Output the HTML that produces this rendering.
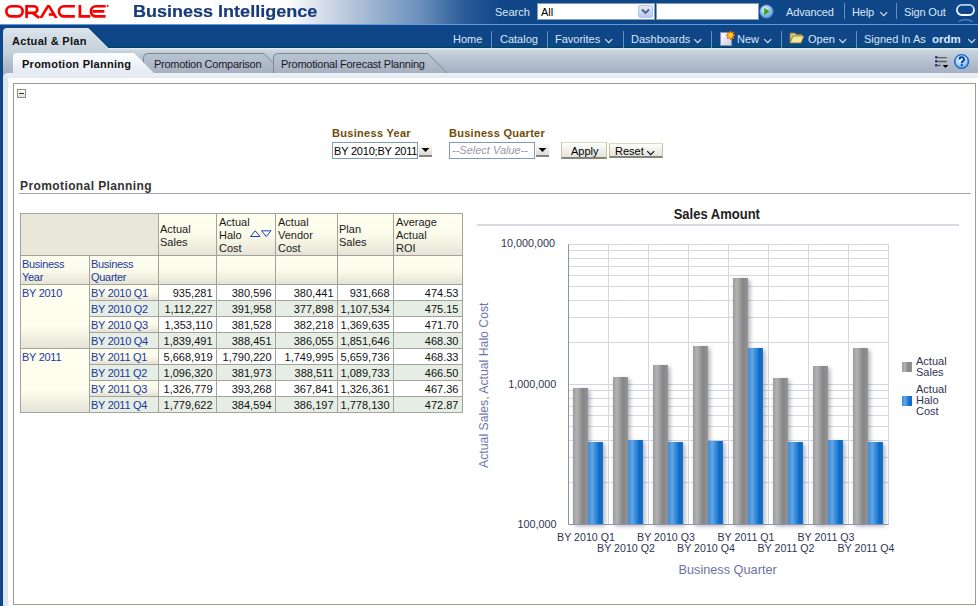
<!DOCTYPE html>
<html><head><meta charset="utf-8">
<style>
*{box-sizing:border-box}
html,body{margin:0;padding:0}
body{width:978px;height:606px;position:relative;overflow:hidden;background:#fff;font-family:"Liberation Sans",sans-serif;font-size:11px;color:#222}
.a{position:absolute;white-space:nowrap}
#hdr{left:0;top:0;width:978px;height:24px;background:linear-gradient(90deg,#fff 0px,#fff 285px,#b6c6da 350px,#6a8fbc 420px,#2a5a98 465px,#0f4789 500px,#0e4688 978px)}
#hline{left:0;top:24px;width:978px;height:1px;background:#5e9ae4}
#nav{left:0;top:25px;width:978px;height:23px;background:linear-gradient(#0e4688 0px,#0e4688 20px,#064e80 20px,#054b7c 22px,#043d6e 22px)}
#tbar{left:0;top:48px;width:978px;height:30px;background:linear-gradient(#d6e0e7 1px,#c8d4dd 3px,#bcc8d4 9px,#afbbcb 17px,#a5b1c3 25px)}
#thl{left:0;top:48px;width:978px;height:1px;background:#e4e9ee}
#tstrip{left:3px;top:73px;width:975px;height:533px;background:linear-gradient(#edf1f7,#e3e9f2 5px,#dce5f0 6px);border-top-left-radius:5px}
#wbody{left:8px;top:78px;width:970px;height:528px;background:#fff}
#lstrip{left:0;top:25px;width:3px;height:581px;background:#0e4688}
#lstrip2{left:3px;top:73px;width:5px;height:533px;background:#d9e4f0}
.w{color:#dbe7f5}
.sep{position:absolute;width:1px;background:#6690b6}
</style></head><body>
<div class="a" id="hdr"></div>
<div class="a" id="hline"></div>
<div class="a" id="nav"></div>
<div class="a" id="tbar"></div>
<div class="a" id="thl"></div>
<div class="a" id="lstrip"></div>
<div class="a" id="tstrip"></div>
<div class="a" id="wbody"></div>

<!-- ORACLE logo -->
<svg class="a" style="left:0;top:0" width="120" height="23" viewBox="0 0 120 23">
 <g fill="none" stroke="#f80000" stroke-width="2.7">
  <rect x="6.35" y="6.25" width="16.3" height="10.2" rx="5.1"/>
  <path d="M26.6 17.9V6.25h7.4a3.3 3.3 0 0 1 0 6.6h-6.2M32.6 12.85l6.6 5"/>
  <path d="M74.9 6.25H64.1a5.1 5.1 0 0 0 0 10.2H74.9"/>
  <path d="M79.9 4.9v11.55h10.4"/>
  <path d="M105.6 6.25H96.0a5.1 5.1 0 0 0 0 10.2H105.6M92.6 11.35H104.4"/>
 </g>
 <path d="M39.2 17.9L47.2 4.9H49.8L57.8 17.9H54.7L48.5 7.7L42.3 17.9Z" fill="#f80000"/>
 <rect x="48.8" y="13.2" width="5.4" height="2.6" fill="#f80000"/>
 <circle cx="107.6" cy="6.0" r="1" fill="#f80000"/>
</svg>
<div class="a" style="left:133px;top:2.5px;font-size:16px;font-weight:bold;color:#183c7a;-webkit-text-stroke:0.2px #183c7a;transform:scaleX(1.126);transform-origin:0 0">Business Intelligence</div>

<!-- header right -->
<div class="a w" style="left:495px;top:6px;font-size:11px">Search</div>
<div class="a" style="left:537px;top:3px;width:118px;height:17px;background:#fff;border:1px solid #7f9db9"></div>
<div class="a" style="left:541px;top:6px;font-size:11px;color:#000">All</div>
<div class="a" style="left:638px;top:5px;width:15px;height:13px;background:linear-gradient(#dfe8fb,#b8caf0);border:1px solid #b4c6ee;border-radius:2px"></div>
<svg class="a" style="left:640px;top:7px" width="11" height="9"><path d="M2 2.5l3.5 3.5 3.5-3.5" fill="none" stroke="#4d6185" stroke-width="1.8"/></svg>
<div class="a" style="left:656px;top:3px;width:103px;height:17px;background:#fff;border:1px solid #7f9db9"></div>
<svg class="a" style="left:759px;top:4px" width="16" height="16"><defs><radialGradient id="gb" cx="40%" cy="35%" r="70%"><stop offset="0" stop-color="#e6f3ff"/><stop offset="1" stop-color="#4b95d8"/></radialGradient></defs><circle cx="7.5" cy="7.5" r="6.8" fill="url(#gb)" stroke="#2f6eb4" stroke-width="0.8"/><path d="M5.2 3.8l5.4 3.7-5.4 3.7z" fill="#3ca21a"/></svg>
<div class="a w" style="left:786px;top:6px;font-size:11px;letter-spacing:-0.15px">Advanced</div>
<div class="sep" style="left:844px;top:3px;height:16px"></div>
<div class="a w" style="left:852px;top:6px;font-size:11px;letter-spacing:-0.15px">Help</div>
<svg class="a" style="left:879px;top:11px" width="10" height="7"><path d="M1.2 1.2l3.5 3.5 3.5-3.5" fill="none" stroke="#dbe7f5" stroke-width="1.15"/></svg>
<div class="sep" style="left:896px;top:3px;height:16px"></div>
<div class="a w" style="left:904px;top:6px;font-size:11px;letter-spacing:-0.15px">Sign Out</div>
<svg class="a" style="left:954px;top:2px" width="22" height="21"><defs><linearGradient id="og" x1="0" y1="0" x2="0" y2="1"><stop offset="0" stop-color="#b4d0f2"/><stop offset="1" stop-color="#ffffff"/></linearGradient></defs><rect x="2.9" y="2.9" width="17.1" height="10.1" rx="5" fill="none" stroke="url(#og)" stroke-width="1.9"/><path d="M4.5 19.6Q11.5 15.4 18.5 19.6" fill="none" stroke="#4a7ab8" stroke-width="1.5"/></svg>

<!-- nav row 2 -->
<div class="a w" style="left:453px;top:33px;font-size:11px">Home</div>
<div class="sep" style="left:491px;top:31px;height:17px"></div>
<div class="a w" style="left:500px;top:33px;font-size:11px">Catalog</div>
<div class="sep" style="left:547px;top:31px;height:17px"></div>
<div class="a w" style="left:555px;top:33px;font-size:11px">Favorites</div>
<svg class="a" style="left:604px;top:38px" width="10" height="7"><path d="M1.2 1.2l3.5 3.5 3.5-3.5" fill="none" stroke="#dbe7f5" stroke-width="1.15"/></svg>
<div class="sep" style="left:623px;top:31px;height:17px"></div>
<div class="a w" style="left:631px;top:33px;font-size:11px">Dashboards</div>
<svg class="a" style="left:693px;top:38px" width="10" height="7"><path d="M1.2 1.2l3.5 3.5 3.5-3.5" fill="none" stroke="#dbe7f5" stroke-width="1.15"/></svg>
<div class="sep" style="left:711px;top:31px;height:17px"></div>
<svg class="a" style="left:719px;top:30px" width="17" height="17"><defs><linearGradient id="ng" x1="0" y1="0" x2="1" y2="1"><stop offset="0" stop-color="#ffffff"/><stop offset="1" stop-color="#c8cce8"/></linearGradient></defs><path d="M1.5 2.5h8l3 3v10h-11z" fill="url(#ng)" stroke="#8a92b8" stroke-width="1"/><path d="M11.5 0.8l1 2.2 2.3-1-1 2.3 2.2 1-2.2 1 1 2.3-2.3-1-1 2.2-1-2.2-2.3 1 1-2.3-2.2-1 2.2-1-1-2.3 2.3 1z" fill="#ffd21c" stroke="#e2620a" stroke-width="0.9" stroke-linejoin="round"/></svg>
<div class="a w" style="left:737px;top:33px;font-size:11px">New</div>
<svg class="a" style="left:763px;top:38px" width="10" height="7"><path d="M1.2 1.2l3.5 3.5 3.5-3.5" fill="none" stroke="#dbe7f5" stroke-width="1.15"/></svg>
<div class="sep" style="left:781px;top:31px;height:17px"></div>
<svg class="a" style="left:789px;top:31px" width="17" height="14"><path d="M1 2h5l1.5 1.5H13v2H4L1 12z" fill="#d8c878" stroke="#8a7a30" stroke-width="0.8"/><path d="M1 12l3-7h11l-3 7z" fill="#f0e6a0" stroke="#8a7a30" stroke-width="0.8"/></svg>
<div class="a w" style="left:808px;top:33px;font-size:11px">Open</div>
<svg class="a" style="left:838px;top:38px" width="10" height="7"><path d="M1.2 1.2l3.5 3.5 3.5-3.5" fill="none" stroke="#dbe7f5" stroke-width="1.15"/></svg>
<div class="sep" style="left:856px;top:31px;height:17px"></div>
<div class="a w" style="left:864px;top:33px;font-size:11px">Signed In As</div>
<div class="a w" style="left:932px;top:33px;font-size:11.5px;font-weight:bold">ordm</div>
<svg class="a" style="left:967px;top:38px" width="10" height="7"><path d="M1.2 1.2l3.5 3.5 3.5-3.5" fill="none" stroke="#dbe7f5" stroke-width="1.15"/></svg>


<!-- tabs -->
<svg class="a" style="left:0;top:0" width="978" height="80">
 <defs>
  <linearGradient id="tg1" x1="0" y1="0" x2="0" y2="1"><stop offset="0" stop-color="#dce5ec"/><stop offset="0.5" stop-color="#cfdae3"/><stop offset="1" stop-color="#c6d2dc"/></linearGradient>
  <linearGradient id="tg2" x1="0" y1="0" x2="0" y2="1"><stop offset="0" stop-color="#fdfeff"/><stop offset="0.5" stop-color="#f0f4f8"/><stop offset="1" stop-color="#e2e9f1"/></linearGradient>
  <linearGradient id="tg3" x1="0" y1="0" x2="0" y2="1"><stop offset="0" stop-color="#b9c4d1"/><stop offset="1" stop-color="#a6b2c1"/></linearGradient>
 </defs>
 <path d="M3 51V32Q3 28 7 28H88L111 51Z" fill="url(#tg1)"/><path d="M88.5 28.5L108 48" stroke="#e4ebf1" stroke-width="1" opacity="0.7"/>
 <path d="M143.5 73V57.5Q143.5 53.5 147.5 53.5H264L283 73" fill="url(#tg3)" stroke="#7b8898" stroke-width="1"/>
 <path d="M273.5 73V57.5Q273.5 53.5 277.5 53.5H428L447 73" fill="url(#tg3)" stroke="#7b8898" stroke-width="1"/>
 <path d="M13 74V57Q13 53 17 53H134L155 74Z" fill="url(#tg2)"/>
</svg>
<div class="a" style="left:12px;top:35px;font-size:11px;font-weight:bold;letter-spacing:0.3px;color:#111">Actual &amp; Plan</div>
<div class="a" style="left:22px;top:58px;font-size:11px;font-weight:bold;letter-spacing:0.26px;color:#111">Promotion Planning</div>
<div class="a" style="left:154px;top:58px;font-size:11px;letter-spacing:-0.26px;color:#1a1a2a">Promotion Comparison</div>
<div class="a" style="left:281px;top:58px;font-size:11px;letter-spacing:-0.23px;color:#1a1a2a">Promotional Forecast Planning</div>
<svg class="a" style="left:934px;top:54px" width="16" height="16"><g fill="#28286a"><circle cx="2.3" cy="3.3" r="1.3"/><circle cx="2.3" cy="7.2" r="1.3"/><circle cx="2.3" cy="11.2" r="1.3"/></g><g stroke="#5c5c5c" stroke-width="1.3"><path d="M3.5 3.6h9.3M3.5 7.5h9.3M3.5 11.5h3"/></g><path d="M8.6 11h5.8l-2.9 3z" fill="#000"/></svg>
<svg class="a" style="left:953px;top:53px" width="18" height="18"><defs><radialGradient id="hg" cx="45%" cy="35%" r="65%"><stop offset="0" stop-color="#f2f9ff"/><stop offset="0.6" stop-color="#a8d4f8"/><stop offset="1" stop-color="#5aa0e8"/></radialGradient></defs><circle cx="8.6" cy="8.5" r="6.9" fill="url(#hg)" stroke="#1b5fc2" stroke-width="1.4"/><path d="M6.4 6.4a2.3 2.2 0 1 1 3.4 1.9c-0.9 0.5-1.1 0.9-1.1 1.9" fill="none" stroke="#0c3c9e" stroke-width="1.9"/><rect x="7.7" y="11.2" width="2" height="1.9" fill="#0c3c9e"/></svg>

<!-- panel -->
<div class="a" style="left:13px;top:83px;width:963px;height:522px;border:1px solid #9a9b93"></div>
<div class="a" style="left:17px;top:89px;width:9px;height:9px;border:1px solid #8f8f88;background:linear-gradient(#fbfbf4,#e4e4da)"></div>
<div class="a" style="left:19px;top:93px;width:5px;height:1px;background:#333"></div>
<!-- CONTENT -->
<!-- prompts -->
<div class="a" style="left:332px;top:127px;font-size:11px;font-weight:bold;letter-spacing:0.3px;color:#6f4c08">Business Year</div>
<div class="a" style="left:449px;top:127px;font-size:11px;font-weight:bold;letter-spacing:0.27px;color:#6f4c08">Business Quarter</div>
<div class="a" style="left:332px;top:142px;width:86px;height:17px;border:1px solid #7f9db9;background:#fff"></div>
<div class="a" style="left:334px;top:145px;font-size:11px;letter-spacing:-0.2px;color:#000">BY 2010;BY 2011</div>
<div class="a" style="left:449px;top:142px;width:86px;height:17px;border:1px solid #7f9db9;background:#fff"></div>
<div class="a" style="left:452px;top:144px;font-size:11px;font-style:italic;color:#9a98a8">--Select Value--</div>
<div class="a" style="left:419px;top:144px;width:13px;height:13px;border-bottom:2px solid #85857f;background:linear-gradient(#fafaf8,#dcdcd4)"></div>
<svg class="a" style="left:419px;top:144px" width="13" height="13"><path d="M2.6 4h7.8l-3.9 4z" fill="#000"/></svg>
<div class="a" style="left:536px;top:144px;width:13px;height:13px;border-bottom:2px solid #85857f;background:linear-gradient(#fafaf8,#dcdcd4)"></div>
<svg class="a" style="left:536px;top:144px" width="13" height="13"><path d="M2.6 4h7.8l-3.9 4z" fill="#000"/></svg>
<div class="a" style="left:561px;top:142px;width:46px;height:17px;border:1px solid #c8c39a;border-top-color:#dcd8bc;border-bottom:2px solid #85847a;background:linear-gradient(#fdfdfa,#e4e4dc)"></div>
<div class="a" style="left:571px;top:145px;font-size:11px;color:#000">Apply</div>
<div class="a" style="left:609px;top:143px;width:54px;height:15px;border:1px solid #c8c39a;border-top-color:#dcd8bc;border-bottom:2px solid #85847a;background:linear-gradient(#fdfdfa,#e4e4dc)"></div>
<div class="a" style="left:615px;top:145px;font-size:11px;color:#000">Reset</div>
<svg class="a" style="left:646px;top:150px" width="10" height="7"><path d="M1.2 1.2l3.5 3.5 3.5-3.5" fill="none" stroke="#111" stroke-width="1.2"/></svg>
<div class="a" style="left:20px;top:179px;font-size:12px;font-weight:bold;letter-spacing:0.4px;color:#333">Promotional Planning</div>
<div class="a" style="left:19px;top:193px;width:952px;height:1px;background:#9ea3b4"></div>
<div class="a" style="left:20px;top:213px;width:138px;height:42px;background:#e9e7d9"></div>
<div class="a" style="left:158px;top:213px;width:304px;height:42px;background:linear-gradient(#ffffef 0%,#fcfcec 50%,#e5e3d5 100%)"></div>
<div class="a" style="left:20px;top:255px;width:442px;height:29px;background:linear-gradient(#ffffef 0%,#fcfcec 50%,#e5e3d5 100%)"></div>
<div class="a" style="left:20px;top:284px;width:69px;height:64px;background:linear-gradient(#ffffef 0%,#fdfdee 65%,#e6e4d6 100%)"></div>
<div class="a" style="left:20px;top:348px;width:69px;height:64px;background:linear-gradient(#ffffef 0%,#fdfdee 65%,#e6e4d6 100%)"></div>
<div class="a" style="left:89px;top:284px;width:69px;height:16px;background:linear-gradient(#ffffef 0%,#fcfcec 50%,#e5e3d5 100%)"></div>
<div class="a" style="left:158px;top:284px;width:304px;height:16px;background:#fff"></div>
<div class="a" style="left:89px;top:300px;width:69px;height:16px;background:#e5ede4"></div>
<div class="a" style="left:158px;top:300px;width:304px;height:16px;background:#e5ede4"></div>
<div class="a" style="left:89px;top:316px;width:69px;height:16px;background:linear-gradient(#ffffef 0%,#fcfcec 50%,#e5e3d5 100%)"></div>
<div class="a" style="left:158px;top:316px;width:304px;height:16px;background:#fff"></div>
<div class="a" style="left:89px;top:332px;width:69px;height:16px;background:#e5ede4"></div>
<div class="a" style="left:158px;top:332px;width:304px;height:16px;background:#e5ede4"></div>
<div class="a" style="left:89px;top:348px;width:69px;height:16px;background:linear-gradient(#ffffef 0%,#fcfcec 50%,#e5e3d5 100%)"></div>
<div class="a" style="left:158px;top:348px;width:304px;height:16px;background:#fff"></div>
<div class="a" style="left:89px;top:364px;width:69px;height:16px;background:#e5ede4"></div>
<div class="a" style="left:158px;top:364px;width:304px;height:16px;background:#e5ede4"></div>
<div class="a" style="left:89px;top:380px;width:69px;height:16px;background:linear-gradient(#ffffef 0%,#fcfcec 50%,#e5e3d5 100%)"></div>
<div class="a" style="left:158px;top:380px;width:304px;height:16px;background:#fff"></div>
<div class="a" style="left:89px;top:396px;width:69px;height:16px;background:#e5ede4"></div>
<div class="a" style="left:158px;top:396px;width:304px;height:16px;background:#e5ede4"></div>
<div class="a" style="left:20px;top:213px;width:443px;height:1px;background:#a3a39b"></div>
<div class="a" style="left:20px;top:255px;width:443px;height:1px;background:#a3a39b"></div>
<div class="a" style="left:20px;top:284px;width:443px;height:1px;background:#a3a39b"></div>
<div class="a" style="left:20px;top:412px;width:443px;height:1px;background:#a3a39b"></div>
<div class="a" style="left:20px;top:348px;width:443px;height:1px;background:#a3a39b"></div>
<div class="a" style="left:89px;top:300px;width:374px;height:1px;background:#a3a39b"></div>
<div class="a" style="left:89px;top:316px;width:374px;height:1px;background:#a3a39b"></div>
<div class="a" style="left:89px;top:332px;width:374px;height:1px;background:#a3a39b"></div>
<div class="a" style="left:89px;top:364px;width:374px;height:1px;background:#a3a39b"></div>
<div class="a" style="left:89px;top:380px;width:374px;height:1px;background:#a3a39b"></div>
<div class="a" style="left:89px;top:396px;width:374px;height:1px;background:#a3a39b"></div>
<div class="a" style="left:20px;top:213px;width:1px;height:200px;background:#a3a39b"></div>
<div class="a" style="left:462px;top:213px;width:1px;height:200px;background:#a3a39b"></div>
<div class="a" style="left:158px;top:213px;width:1px;height:200px;background:#a3a39b"></div>
<div class="a" style="left:89px;top:255px;width:1px;height:158px;background:#a3a39b"></div>
<div class="a" style="left:216px;top:213px;width:1px;height:200px;background:#a3a39b"></div>
<div class="a" style="left:275px;top:213px;width:1px;height:200px;background:#a3a39b"></div>
<div class="a" style="left:337px;top:213px;width:1px;height:200px;background:#a3a39b"></div>
<div class="a" style="left:393px;top:213px;width:1px;height:200px;background:#a3a39b"></div>
<div class="t a" style="left:160px;top:223.4px;font-size:11px;line-height:13px;color:#1a1a1a;">Actual</div>
<div class="t a" style="left:160px;top:236.4px;font-size:11px;line-height:13px;color:#1a1a1a;">Sales</div>
<div class="t a" style="left:219px;top:215.5px;font-size:11px;line-height:13px;color:#1a1a1a;">Actual</div>
<div class="t a" style="left:219px;top:228.5px;font-size:11px;line-height:13px;color:#1a1a1a;">Halo</div>
<div class="t a" style="left:219px;top:241.5px;font-size:11px;line-height:13px;color:#1a1a1a;">Cost</div>
<div class="t a" style="left:278px;top:215.5px;font-size:11px;line-height:13px;color:#1a1a1a;">Actual</div>
<div class="t a" style="left:278px;top:228.5px;font-size:11px;line-height:13px;color:#1a1a1a;">Vendor</div>
<div class="t a" style="left:278px;top:241.5px;font-size:11px;line-height:13px;color:#1a1a1a;">Cost</div>
<div class="t a" style="left:339px;top:223.4px;font-size:11px;line-height:13px;color:#1a1a1a;">Plan</div>
<div class="t a" style="left:339px;top:236.4px;font-size:11px;line-height:13px;color:#1a1a1a;">Sales</div>
<div class="t a" style="left:396px;top:215.5px;font-size:11px;line-height:13px;color:#1a1a1a;">Average</div>
<div class="t a" style="left:396px;top:228.5px;font-size:11px;line-height:13px;color:#1a1a1a;">Actual</div>
<div class="t a" style="left:396px;top:241.5px;font-size:11px;line-height:13px;color:#1a1a1a;">ROI</div>
<svg class="a" style="left:249px;top:229px" width="25" height="9"><path d="M1.5 7.5h9.5L6.2 1.8z" fill="none" stroke="#1c3fae" stroke-width="1"/><path d="M12.5 1.8h9.5L17.2 7.5z" fill="none" stroke="#1c3fae" stroke-width="1"/></svg>
<div class="t a" style="left:22px;top:257.8px;font-size:11px;line-height:13px;color:#1b38a0;letter-spacing:-0.3px">Business</div>
<div class="t a" style="left:22px;top:271px;font-size:11px;line-height:13px;color:#1b38a0;letter-spacing:-0.3px">Year</div>
<div class="t a" style="left:91px;top:257.8px;font-size:11px;line-height:13px;color:#1b38a0;letter-spacing:-0.3px">Business</div>
<div class="t a" style="left:91px;top:271px;font-size:11px;line-height:13px;color:#1b38a0;letter-spacing:-0.3px">Quarter</div>
<div class="t a" style="left:22px;top:287px;font-size:11px;line-height:13px;color:#1b38a0;letter-spacing:-0.28px">BY 2010</div>
<div class="t a" style="left:22px;top:351px;font-size:11px;line-height:13px;color:#1b38a0;letter-spacing:-0.28px">BY 2011</div>
<div class="t a" style="left:91px;top:287.2px;font-size:11px;line-height:13px;color:#1b38a0;letter-spacing:-0.28px">BY 2010 Q1</div>
<div class="t a" style="right:765.5px;top:287.2px;font-size:11px;line-height:13px;color:#111">935,281</div>
<div class="t a" style="right:706.5px;top:287.2px;font-size:11px;line-height:13px;color:#111">380,596</div>
<div class="t a" style="right:644.5px;top:287.2px;font-size:11px;line-height:13px;color:#111">380,441</div>
<div class="t a" style="right:588.5px;top:287.2px;font-size:11px;line-height:13px;color:#111">931,668</div>
<div class="t a" style="right:519.5px;top:287.2px;font-size:11px;line-height:13px;color:#111">474.53</div>
<div class="t a" style="left:91px;top:303.2px;font-size:11px;line-height:13px;color:#1b38a0;letter-spacing:-0.28px">BY 2010 Q2</div>
<div class="t a" style="right:765.5px;top:303.2px;font-size:11px;line-height:13px;color:#111">1,112,227</div>
<div class="t a" style="right:706.5px;top:303.2px;font-size:11px;line-height:13px;color:#111">391,958</div>
<div class="t a" style="right:644.5px;top:303.2px;font-size:11px;line-height:13px;color:#111">377,898</div>
<div class="t a" style="right:588.5px;top:303.2px;font-size:11px;line-height:13px;color:#111">1,107,534</div>
<div class="t a" style="right:519.5px;top:303.2px;font-size:11px;line-height:13px;color:#111">475.15</div>
<div class="t a" style="left:91px;top:319.2px;font-size:11px;line-height:13px;color:#1b38a0;letter-spacing:-0.28px">BY 2010 Q3</div>
<div class="t a" style="right:765.5px;top:319.2px;font-size:11px;line-height:13px;color:#111">1,353,110</div>
<div class="t a" style="right:706.5px;top:319.2px;font-size:11px;line-height:13px;color:#111">381,528</div>
<div class="t a" style="right:644.5px;top:319.2px;font-size:11px;line-height:13px;color:#111">382,218</div>
<div class="t a" style="right:588.5px;top:319.2px;font-size:11px;line-height:13px;color:#111">1,369,635</div>
<div class="t a" style="right:519.5px;top:319.2px;font-size:11px;line-height:13px;color:#111">471.70</div>
<div class="t a" style="left:91px;top:335.2px;font-size:11px;line-height:13px;color:#1b38a0;letter-spacing:-0.28px">BY 2010 Q4</div>
<div class="t a" style="right:765.5px;top:335.2px;font-size:11px;line-height:13px;color:#111">1,839,491</div>
<div class="t a" style="right:706.5px;top:335.2px;font-size:11px;line-height:13px;color:#111">388,451</div>
<div class="t a" style="right:644.5px;top:335.2px;font-size:11px;line-height:13px;color:#111">386,055</div>
<div class="t a" style="right:588.5px;top:335.2px;font-size:11px;line-height:13px;color:#111">1,851,646</div>
<div class="t a" style="right:519.5px;top:335.2px;font-size:11px;line-height:13px;color:#111">468.30</div>
<div class="t a" style="left:91px;top:351.2px;font-size:11px;line-height:13px;color:#1b38a0;letter-spacing:-0.28px">BY 2011 Q1</div>
<div class="t a" style="right:765.5px;top:351.2px;font-size:11px;line-height:13px;color:#111">5,668,919</div>
<div class="t a" style="right:706.5px;top:351.2px;font-size:11px;line-height:13px;color:#111">1,790,220</div>
<div class="t a" style="right:644.5px;top:351.2px;font-size:11px;line-height:13px;color:#111">1,749,995</div>
<div class="t a" style="right:588.5px;top:351.2px;font-size:11px;line-height:13px;color:#111">5,659,736</div>
<div class="t a" style="right:519.5px;top:351.2px;font-size:11px;line-height:13px;color:#111">468.33</div>
<div class="t a" style="left:91px;top:367.2px;font-size:11px;line-height:13px;color:#1b38a0;letter-spacing:-0.28px">BY 2011 Q2</div>
<div class="t a" style="right:765.5px;top:367.2px;font-size:11px;line-height:13px;color:#111">1,096,320</div>
<div class="t a" style="right:706.5px;top:367.2px;font-size:11px;line-height:13px;color:#111">381,973</div>
<div class="t a" style="right:644.5px;top:367.2px;font-size:11px;line-height:13px;color:#111">388,511</div>
<div class="t a" style="right:588.5px;top:367.2px;font-size:11px;line-height:13px;color:#111">1,089,733</div>
<div class="t a" style="right:519.5px;top:367.2px;font-size:11px;line-height:13px;color:#111">466.50</div>
<div class="t a" style="left:91px;top:383.2px;font-size:11px;line-height:13px;color:#1b38a0;letter-spacing:-0.28px">BY 2011 Q3</div>
<div class="t a" style="right:765.5px;top:383.2px;font-size:11px;line-height:13px;color:#111">1,326,779</div>
<div class="t a" style="right:706.5px;top:383.2px;font-size:11px;line-height:13px;color:#111">393,268</div>
<div class="t a" style="right:644.5px;top:383.2px;font-size:11px;line-height:13px;color:#111">367,841</div>
<div class="t a" style="right:588.5px;top:383.2px;font-size:11px;line-height:13px;color:#111">1,326,361</div>
<div class="t a" style="right:519.5px;top:383.2px;font-size:11px;line-height:13px;color:#111">467.36</div>
<div class="t a" style="left:91px;top:399.2px;font-size:11px;line-height:13px;color:#1b38a0;letter-spacing:-0.28px">BY 2011 Q4</div>
<div class="t a" style="right:765.5px;top:399.2px;font-size:11px;line-height:13px;color:#111">1,779,622</div>
<div class="t a" style="right:706.5px;top:399.2px;font-size:11px;line-height:13px;color:#111">384,594</div>
<div class="t a" style="right:644.5px;top:399.2px;font-size:11px;line-height:13px;color:#111">386,197</div>
<div class="t a" style="right:588.5px;top:399.2px;font-size:11px;line-height:13px;color:#111">1,778,130</div>
<div class="t a" style="right:519.5px;top:399.2px;font-size:11px;line-height:13px;color:#111">472.87</div>
<svg class="a" style="left:0;top:0" width="978" height="606" viewBox="0 0 978 606">
<defs>
<linearGradient id="gg" x1="0" x2="1" y1="0" y2="0"><stop offset="0" stop-color="#9c9c9c"/><stop offset="0.25" stop-color="#b2b2b2"/><stop offset="0.68" stop-color="#858585"/><stop offset="1" stop-color="#959595"/></linearGradient>
<linearGradient id="bg" x1="0" x2="1" y1="0" y2="0"><stop offset="0" stop-color="#3e88d4"/><stop offset="0.28" stop-color="#62a8e8"/><stop offset="0.78" stop-color="#0a69c6"/><stop offset="1" stop-color="#1a72c6"/></linearGradient>
<linearGradient id="sg" x1="0" x2="1" y1="0" y2="0"><stop offset="0" stop-color="#c4c4c8"/><stop offset="1" stop-color="#c4c4c8" stop-opacity="0"/></linearGradient>
<filter id="blr" x="-50%" y="-10%" width="200%" height="120%"><feGaussianBlur stdDeviation="1.9"/></filter>
</defs>
<rect x="477" y="224" width="482" height="2" fill="#d8d8e6"/>
<text transform="translate(716.8 219.4) scale(0.93 1)" x="0" y="0" font-family="Liberation Sans" font-weight="bold" font-size="14" fill="#1e1e1e" text-anchor="middle">Sales Amount</text>
<rect x="568.5" y="244.5" width="320.0" height="280.0" fill="#fff" stroke="#d5d5e5" stroke-width="1"/>
<path d="M568.5 482.5H888.5" stroke="#d5d5e5" stroke-width="1"/>
<path d="M568.5 457.5H888.5" stroke="#d5d5e5" stroke-width="1"/>
<path d="M568.5 440.5H888.5" stroke="#d5d5e5" stroke-width="1"/>
<path d="M568.5 426.5H888.5" stroke="#d5d5e5" stroke-width="1"/>
<path d="M568.5 415.5H888.5" stroke="#d5d5e5" stroke-width="1"/>
<path d="M568.5 406.5H888.5" stroke="#d5d5e5" stroke-width="1"/>
<path d="M568.5 398.5H888.5" stroke="#d5d5e5" stroke-width="1"/>
<path d="M568.5 390.5H888.5" stroke="#d5d5e5" stroke-width="1"/>
<path d="M568.5 342.5H888.5" stroke="#d5d5e5" stroke-width="1"/>
<path d="M568.5 317.5H888.5" stroke="#d5d5e5" stroke-width="1"/>
<path d="M568.5 300.5H888.5" stroke="#d5d5e5" stroke-width="1"/>
<path d="M568.5 286.5H888.5" stroke="#d5d5e5" stroke-width="1"/>
<path d="M568.5 275.5H888.5" stroke="#d5d5e5" stroke-width="1"/>
<path d="M568.5 266.5H888.5" stroke="#d5d5e5" stroke-width="1"/>
<path d="M568.5 258.5H888.5" stroke="#d5d5e5" stroke-width="1"/>
<path d="M568.5 250.5H888.5" stroke="#d5d5e5" stroke-width="1"/>
<path d="M568.5 384.5H888.5" stroke="#d5d5e5" stroke-width="1"/>
<path d="M608.5 244.5V524.5" stroke="#d5d5e5" stroke-width="1"/>
<path d="M648.5 244.5V524.5" stroke="#d5d5e5" stroke-width="1"/>
<path d="M688.5 244.5V524.5" stroke="#d5d5e5" stroke-width="1"/>
<path d="M728.5 244.5V524.5" stroke="#d5d5e5" stroke-width="1"/>
<path d="M768.5 244.5V524.5" stroke="#d5d5e5" stroke-width="1"/>
<path d="M808.5 244.5V524.5" stroke="#d5d5e5" stroke-width="1"/>
<path d="M848.5 244.5V524.5" stroke="#d5d5e5" stroke-width="1"/>
<rect x="575" y="390" width="15" height="136" fill="#3c4258" opacity="0.42" filter="url(#blr)"/>
<rect x="590" y="444" width="15" height="82" fill="#3c4258" opacity="0.42" filter="url(#blr)"/>
<rect x="573" y="388.0" width="15" height="136.0" fill="url(#gg)"/>
<rect x="588" y="442.0" width="15" height="82.0" fill="url(#bg)"/>
<rect x="615" y="379" width="15" height="147" fill="#3c4258" opacity="0.42" filter="url(#blr)"/>
<rect x="630" y="442" width="15" height="84" fill="#3c4258" opacity="0.42" filter="url(#blr)"/>
<rect x="613" y="377.0" width="15" height="147.0" fill="url(#gg)"/>
<rect x="628" y="440.0" width="15" height="84.0" fill="url(#bg)"/>
<rect x="655" y="367" width="15" height="159" fill="#3c4258" opacity="0.42" filter="url(#blr)"/>
<rect x="670" y="444" width="15" height="82" fill="#3c4258" opacity="0.42" filter="url(#blr)"/>
<rect x="653" y="365.0" width="15" height="159.0" fill="url(#gg)"/>
<rect x="668" y="442.0" width="15" height="82.0" fill="url(#bg)"/>
<rect x="695" y="348" width="15" height="178" fill="#3c4258" opacity="0.42" filter="url(#blr)"/>
<rect x="710" y="443" width="15" height="83" fill="#3c4258" opacity="0.42" filter="url(#blr)"/>
<rect x="693" y="346.0" width="15" height="178.0" fill="url(#gg)"/>
<rect x="708" y="441.0" width="15" height="83.0" fill="url(#bg)"/>
<rect x="735" y="280" width="15" height="246" fill="#3c4258" opacity="0.42" filter="url(#blr)"/>
<rect x="750" y="350" width="15" height="176" fill="#3c4258" opacity="0.42" filter="url(#blr)"/>
<rect x="733" y="278.0" width="15" height="246.0" fill="url(#gg)"/>
<rect x="748" y="348.0" width="15" height="176.0" fill="url(#bg)"/>
<rect x="775" y="380" width="15" height="146" fill="#3c4258" opacity="0.42" filter="url(#blr)"/>
<rect x="790" y="444" width="15" height="82" fill="#3c4258" opacity="0.42" filter="url(#blr)"/>
<rect x="773" y="378.0" width="15" height="146.0" fill="url(#gg)"/>
<rect x="788" y="442.0" width="15" height="82.0" fill="url(#bg)"/>
<rect x="815" y="368" width="15" height="158" fill="#3c4258" opacity="0.42" filter="url(#blr)"/>
<rect x="830" y="442" width="15" height="84" fill="#3c4258" opacity="0.42" filter="url(#blr)"/>
<rect x="813" y="366.0" width="15" height="158.0" fill="url(#gg)"/>
<rect x="828" y="440.0" width="15" height="84.0" fill="url(#bg)"/>
<rect x="855" y="350" width="15" height="176" fill="#3c4258" opacity="0.42" filter="url(#blr)"/>
<rect x="870" y="444" width="15" height="82" fill="#3c4258" opacity="0.42" filter="url(#blr)"/>
<rect x="853" y="348.0" width="15" height="176.0" fill="url(#gg)"/>
<rect x="868" y="442.0" width="15" height="82.0" fill="url(#bg)"/>
<path d="M568.5 244.5V524.5H888.5" fill="none" stroke="#8a90b8" stroke-width="1"/>
<text x="555" y="247.1" font-family="Liberation Sans" font-size="10.8" fill="#2f3450" text-anchor="end">10,000,000</text>
<text x="556.2" y="388" font-family="Liberation Sans" font-size="10.8" fill="#2f3450" text-anchor="end">1,000,000</text>
<text x="556.6" y="527.6" font-family="Liberation Sans" font-size="10.8" fill="#2f3450" text-anchor="end">100,000</text>
<text x="586" y="540.6" font-family="Liberation Sans" font-size="10.65" fill="#2f3450" text-anchor="middle">BY 2010 Q1</text>
<text x="626" y="551.8" font-family="Liberation Sans" font-size="10.65" fill="#2f3450" text-anchor="middle">BY 2010 Q2</text>
<text x="666" y="540.6" font-family="Liberation Sans" font-size="10.65" fill="#2f3450" text-anchor="middle">BY 2010 Q3</text>
<text x="706" y="551.8" font-family="Liberation Sans" font-size="10.65" fill="#2f3450" text-anchor="middle">BY 2010 Q4</text>
<text x="746" y="540.6" font-family="Liberation Sans" font-size="10.65" fill="#2f3450" text-anchor="middle">BY 2011 Q1</text>
<text x="786" y="551.8" font-family="Liberation Sans" font-size="10.65" fill="#2f3450" text-anchor="middle">BY 2011 Q2</text>
<text x="826" y="540.6" font-family="Liberation Sans" font-size="10.65" fill="#2f3450" text-anchor="middle">BY 2011 Q3</text>
<text x="866" y="551.8" font-family="Liberation Sans" font-size="10.65" fill="#2f3450" text-anchor="middle">BY 2011 Q4</text>
<text transform="translate(727.6 573.6) scale(1.06 1)" x="0" y="0" font-family="Liberation Sans" font-size="12" fill="#6d72a6" text-anchor="middle">Business Quarter</text>
<text transform="translate(488.2 385.2) rotate(-90)" x="0" y="0" font-family="Liberation Sans" font-size="12.25" fill="#6f74aa" text-anchor="middle">Actual Sales, Actual Halo Cost</text>
<rect x="902" y="362" width="10" height="10" fill="url(#gg)"/>
<rect x="902" y="396" width="10" height="10" fill="url(#bg)"/>
<text x="916" y="364.5" font-family="Liberation Sans" font-size="11" fill="#2f3450">Actual</text>
<text x="916" y="375.7" font-family="Liberation Sans" font-size="11" fill="#2f3450">Sales</text>
<text x="916" y="392.5" font-family="Liberation Sans" font-size="11" fill="#2f3450">Actual</text>
<text x="916" y="403.5" font-family="Liberation Sans" font-size="11" fill="#2f3450">Halo</text>
<text x="916" y="414.5" font-family="Liberation Sans" font-size="11" fill="#2f3450">Cost</text>
</svg>
</body></html>
